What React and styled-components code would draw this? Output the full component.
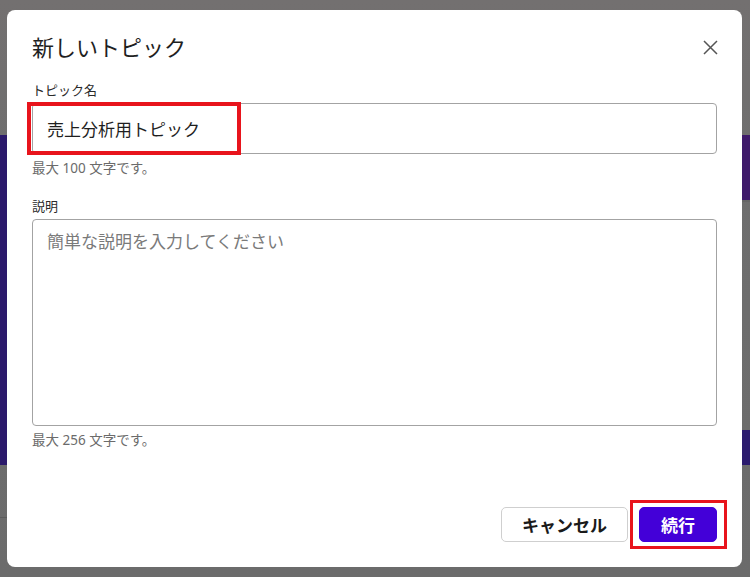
import React, { useState } from 'react';
import styled, { createGlobalStyle } from 'styled-components';

const GlobalStyle = createGlobalStyle`
  * { box-sizing: border-box; }
  html, body {
    margin: 0;
    height: 100%;
  }
  body {
    font-family: "Noto Sans", "Noto Sans CJK JP", sans-serif;
    background:
      linear-gradient(to bottom, transparent 135px, #2b1a6b 135px, #2b1a6b 465px, transparent 465px, transparent 517px, #5c5c5c 517px, #5c5c5c 518px, transparent 518px) left top / 7px 100% no-repeat,
      linear-gradient(to bottom, transparent 135px, #3f1a6b 135px, #3f1a6b 200px, #666 200px, #666 202px, transparent 202px, transparent 430px, #2b1b6e 430px, #2b1b6e 465px, transparent 465px) right top / 8px 100% no-repeat,
      linear-gradient(to bottom, #737070, #6e6e6e 30%, #6b6b6b);
  }
`;

const Page = styled.div`
  height: 100vh;
  display: flex;
  padding: 10px 8px 10px 7px;
`;

const Dialog = styled.div`
  flex: 1;
  display: flex;
  flex-direction: column;
  background: #fff;
  border-radius: 8px;
  padding: 21px 25px 25px;
`;

const Header = styled.div`
  display: flex;
  align-items: center;
  justify-content: space-between;
  height: 32px;
`;

const Title = styled.h2`
  margin: 0;
  font-size: 22px;
  font-weight: 400;
  color: #1f1f1f;
  line-height: 32px;
`;

const CloseButton = styled.button`
  border: none;
  background: none;
  padding: 0;
  width: 20px;
  height: 20px;
  display: flex;
  align-items: center;
  justify-content: center;
  margin-right: -3px;
  cursor: pointer;
`;

const Field = styled.div`
  display: flex;
  flex-direction: column;
  margin-top: ${({ $top }) => $top}px;
`;

const Label = styled.label`
  font-size: 13px;
  line-height: 18px;
  color: #2a2a2a;
  margin-bottom: 4px;
`;

const FieldBox = styled.div`
  position: relative;
`;

const TextInput = styled.input`
  width: 100%;
  height: 51px;
  border: 1px solid #a3a3a3;
  border-radius: 4px;
  padding: 0 14px;
  font-family: inherit;
  font-size: 17px;
  color: #1f1f1f;
  outline: none;
`;

const TextArea = styled.textarea`
  display: block;
  width: 100%;
  height: 207px;
  border: 1px solid #a3a3a3;
  border-radius: 4px;
  padding: 9px 14px;
  font-family: inherit;
  font-size: 17px;
  line-height: 26px;
  color: #1f1f1f;
  resize: none;
  outline: none;

  &::placeholder {
    color: #7a7a7a;
  }
`;

const Hint = styled.div`
  font-size: 13.5px;
  line-height: 18px;
  color: #6b6b6b;
  margin-top: 5px;
`;

const Highlight = styled.div`
  position: absolute;
  left: ${({ $l }) => $l}px;
  top: ${({ $t }) => $t}px;
  width: ${({ $w }) => $w}px;
  height: ${({ $h }) => $h}px;
  border: ${({ $b }) => $b}px solid #e8141c;
  pointer-events: none;
`;

const Footer = styled.div`
  margin-top: auto;
  display: flex;
  justify-content: flex-end;
  gap: 11px;
`;

const Button = styled.button`
  position: relative;
  height: 35px;
  padding: 0 ${({ $primary }) => ($primary ? 21 : 20)}px;
  border-radius: 5px;
  border: 1px solid ${({ $primary }) => ($primary ? '#4300d8' : '#cfcfcf')};
  background: ${({ $primary }) => ($primary ? '#4300d8' : '#fff')};
  color: ${({ $primary }) => ($primary ? '#fff' : '#1a1a1a')};
  font-family: inherit;
  font-size: 17px;
  font-weight: 700;
  cursor: pointer;
`;

const App = () => {
  const [name, setName] = useState('売上分析用トピック');
  const [desc, setDesc] = useState('');

  return (
    <>
      <GlobalStyle />
      <Page>
        <Dialog>
          <Header>
            <Title>新しいトピック</Title>
            <CloseButton aria-label="閉じる">
              <svg width="15" height="15" viewBox="0 0 15 15">
                <path d="M1 1 L14 14 M14 1 L1 14" stroke="#555" strokeWidth="1.5" fill="none" />
              </svg>
            </CloseButton>
          </Header>

          <Field $top={18}>
            <Label>トピック名</Label>
            <FieldBox>
              <TextInput value={name} onChange={(e) => setName(e.target.value)} />
              <Highlight $l={-5} $t={-1} $w={214} $h={53} $b={4} />
            </FieldBox>
            <Hint>最大 100 文字です。</Hint>
          </Field>

          <Field $top={20}>
            <Label>説明</Label>
            <TextArea
              placeholder="簡単な説明を入力してください"
              value={desc}
              onChange={(e) => setDesc(e.target.value)}
            />
            <Hint>最大 256 文字です。</Hint>
          </Field>

          <Footer>
            <Button>キャンセル</Button>
            <Button $primary>
              続行
              <Highlight $l={-10} $t={-8} $w={97} $h={49} $b={3} />
            </Button>
          </Footer>
        </Dialog>
      </Page>
    </>
  );
};

export default App;
